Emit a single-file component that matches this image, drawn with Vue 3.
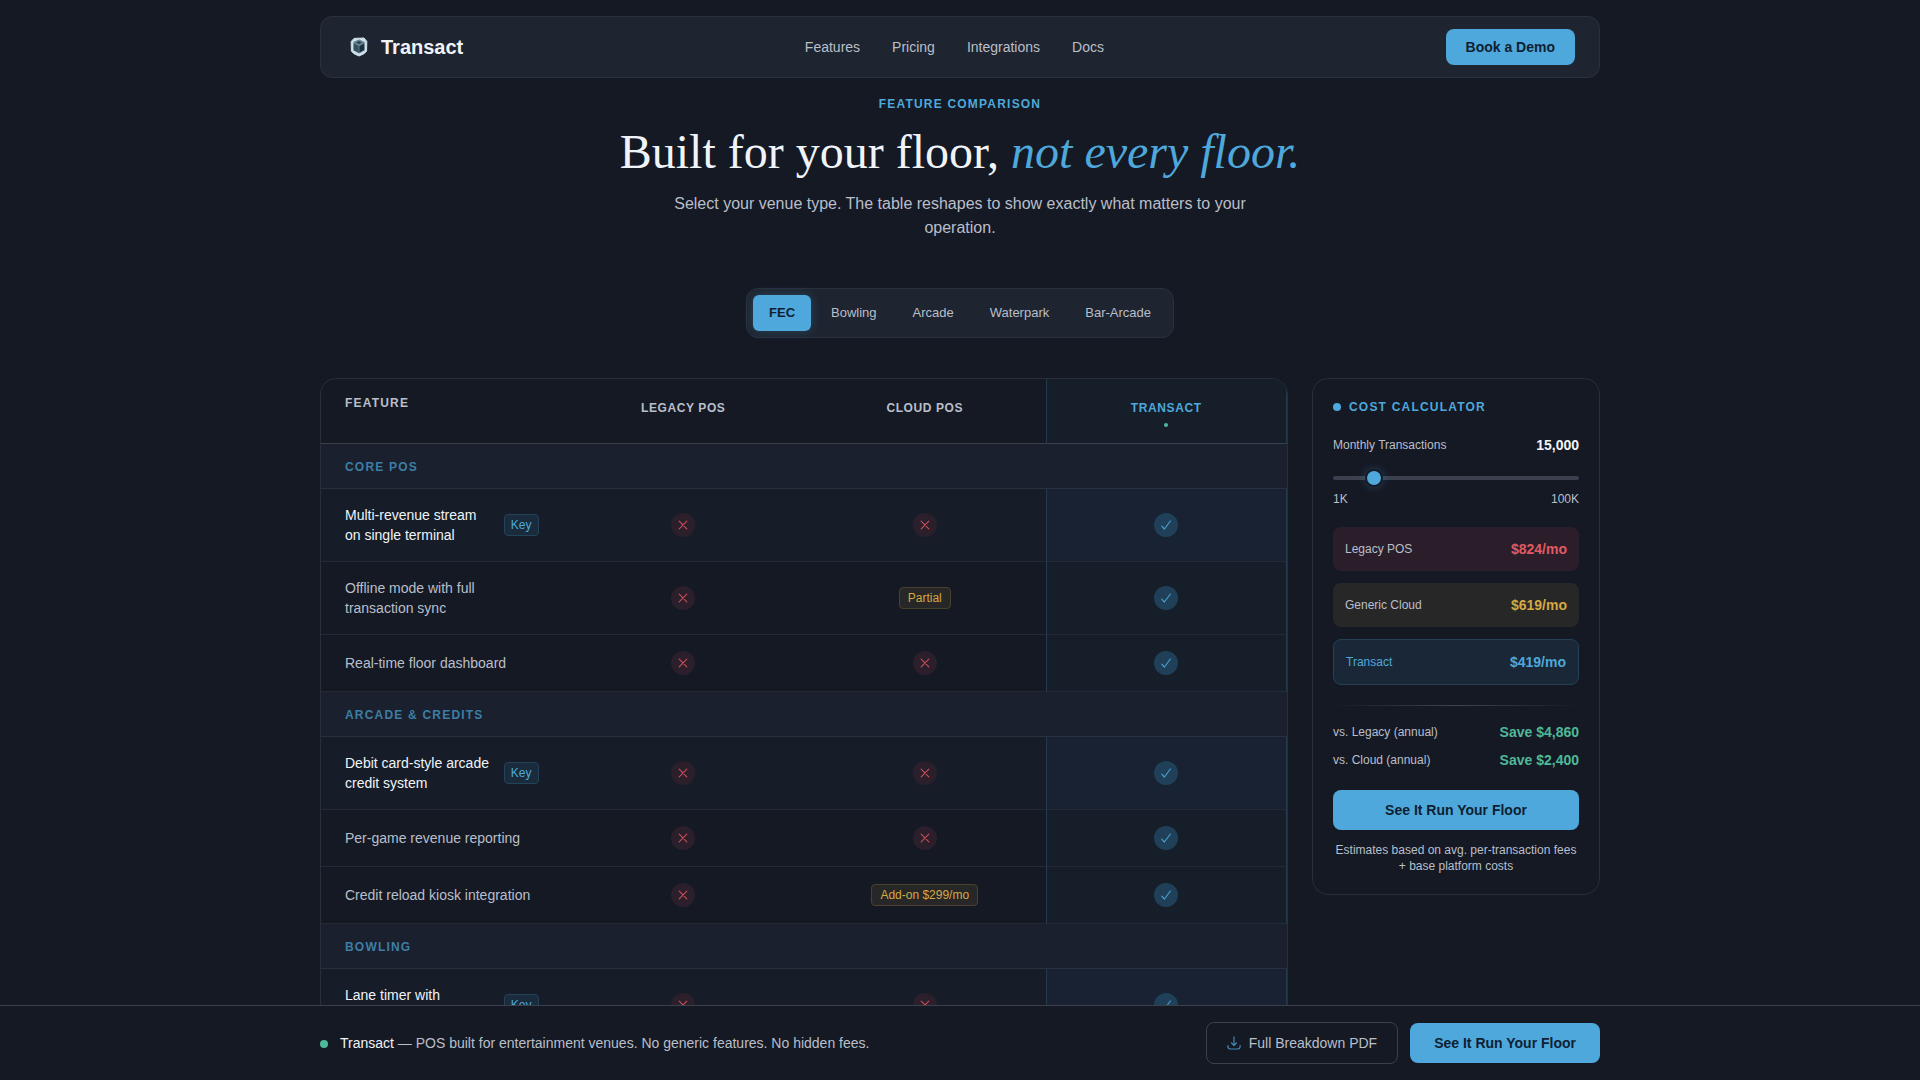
<template>
  <div class="page">
    <header class="nav">
      <a href="#" class="brand">
        <svg class="brand-logo" viewBox="0 0 28 28" aria-hidden="true">
          <path d="M9 5.4 L19 5 L21.8 8.4 L21.6 18 Q20.4 20.8 14 23 Q7.6 20.8 6.4 18 L6.2 8.6 Z" fill="#cfe2ea" stroke="#cfe2ea" stroke-width="1" stroke-linejoin="round" />
          <path d="M14 6.4 L19.6 9 V17.4 L14 20.4 L8.4 17.4 V9 Z" fill="#5d7886" />
          <path d="M14 6.8 L19.2 9.4 L14 12.4 L8.8 9.4 Z" fill="#6f8b98" />
          <path d="M8.8 10.6 L13.5 13.2 V19.4 L8.8 16.8 Z" fill="#34505f" />
          <path d="M19.2 10.6 L14.5 13.2 V19.4 L19.2 16.8 Z" fill="#1b313e" />
          <path d="M10.8 9.4 L14 8 L17.2 9.4 L14 11.2 Z" fill="#2b4654" />
        </svg>
        <span class="brand-name">Transact</span>
      </a>
      <nav class="nav-links">
        <a v-for="link in links" :key="link" href="#">{{ link }}</a>
      </nav>
      <button type="button" class="btn btn-demo">Book a Demo</button>
    </header>

    <main>
      <section class="hero">
        <p class="eyebrow">Feature Comparison</p>
        <h1>Built for your floor, <em>not every floor.</em></h1>
        <p class="lead">Select your venue type. The table reshapes to show exactly what matters to your operation.</p>
      </section>

      <div class="tabs">
        <button
          v-for="venue in venues"
          :key="venue"
          type="button"
          class="tab"
          :class="{ active: venue === activeVenue }"
          @click="activeVenue = venue"
        >{{ venue }}</button>
      </div>

      <div class="columns">
        <div class="table-card">
          <table>
            <thead>
              <tr>
                <th class="th-feature">Feature</th>
                <th>Legacy POS</th>
                <th>Cloud POS</th>
                <th class="own">Transact<span class="own-dot"></span></th>
              </tr>
            </thead>
            <tbody v-for="group in groups" :key="group.name">
              <tr class="group-row">
                <th colspan="4">{{ group.name }}</th>
              </tr>
              <tr v-for="row in group.rows" :key="row.label" :class="{ highlight: row.key }">
                <td>
                  <div class="feature">
                    <span>{{ row.label }}</span>
                    <span v-if="row.key" class="badge badge-key">Key</span>
                  </div>
                </td>
                <td
                  v-for="(value, index) in row.values"
                  :key="index"
                  class="value"
                  :class="{ own: index === 2 }"
                >
                  <span v-if="value === 'yes'" class="mark mark-yes">
                    <svg viewBox="0 0 24 24" role="img" aria-label="Yes"><path d="M7.8 13.2 L10.4 16 L16.4 8" /></svg>
                  </span>
                  <span v-else-if="value === 'no'" class="mark mark-no">
                    <svg viewBox="0 0 24 24" role="img" aria-label="No"><path d="M8.2 8.2 L15.8 15.8 M15.8 8.2 L8.2 15.8" /></svg>
                  </span>
                  <span v-else class="badge badge-partial">{{ value }}</span>
                </td>
              </tr>
            </tbody>
          </table>
        </div>

        <aside class="calc">
          <h2>Cost Calculator</h2>
          <div class="line">
            <label for="volume">Monthly Transactions</label>
            <strong>{{ format(volume) }}</strong>
          </div>
          <input id="volume" v-model.number="volume" type="range" min="1000" max="100000" step="1000" />
          <div class="scale">
            <span>1K</span>
            <span>100K</span>
          </div>

          <div class="costs">
            <div class="line cost legacy">
              <span>Legacy POS</span>
              <strong>${{ format(legacyCost) }}/mo</strong>
            </div>
            <div class="line cost cloud">
              <span>Generic Cloud</span>
              <strong>${{ format(cloudCost) }}/mo</strong>
            </div>
            <div class="line cost transact">
              <span>Transact</span>
              <strong>${{ format(transactCost) }}/mo</strong>
            </div>
          </div>

          <div class="divider"></div>

          <div class="savings">
            <div class="line">
              <span>vs. Legacy (annual)</span>
              <strong>Save ${{ format((legacyCost - transactCost) * 12) }}</strong>
            </div>
            <div class="line">
              <span>vs. Cloud (annual)</span>
              <strong>Save ${{ format((cloudCost - transactCost) * 12) }}</strong>
            </div>
          </div>

          <button type="button" class="btn btn-wide">See It Run Your Floor</button>
          <p class="note">Estimates based on avg. per-transaction fees + base platform costs</p>
        </aside>
      </div>
    </main>

    <footer class="bar">
      <div class="bar-inner">
        <p class="bar-text"><b>Transact</b> — POS built for entertainment venues. No generic features. No hidden fees.</p>
        <div class="bar-actions">
          <button type="button" class="btn-outline">
            <svg viewBox="0 0 14 14" aria-hidden="true">
              <path d="M7 0.8 V9.4 M4.4 6.9 L7 9.5 L9.6 6.9" />
              <path d="M0.9 9.6 V10.6 Q0.9 13 3.3 13 H10.7 Q13.1 13 13.1 10.6 V9.6" />
            </svg>
            Full Breakdown PDF
          </button>
          <button type="button" class="btn btn-large">See It Run Your Floor</button>
        </div>
      </div>
    </footer>
  </div>
</template>

<script setup>
import { ref, computed } from "vue";

const links = ["Features", "Pricing", "Integrations", "Docs"];
const venues = ["FEC", "Bowling", "Arcade", "Waterpark", "Bar-Arcade"];
const activeVenue = ref("FEC");

// values are in column order: legacy, cloud, transact
const groups = [
  {
    name: "Core POS",
    rows: [
      { label: "Multi-revenue stream on single terminal", key: true, values: ["no", "no", "yes"] },
      { label: "Offline mode with full transaction sync", values: ["no", "Partial", "yes"] },
      { label: "Real-time floor dashboard", values: ["no", "no", "yes"] },
    ],
  },
  {
    name: "Arcade & Credits",
    rows: [
      { label: "Debit card-style arcade credit system", key: true, values: ["no", "no", "yes"] },
      { label: "Per-game revenue reporting", values: ["no", "no", "yes"] },
      { label: "Credit reload kiosk integration", values: ["no", "Add-on $299/mo", "yes"] },
    ],
  },
  {
    name: "Bowling",
    rows: [
      { label: "Lane timer with automatic billing", key: true, values: ["no", "no", "yes"] },
    ],
  },
];

const volume = ref(15000);

const legacyCost = computed(() => Math.round(299 + volume.value * 0.035));
const cloudCost = computed(() => Math.round(169 + volume.value * 0.03));
const transactCost = computed(() => Math.round(119 + volume.value * 0.02));

function format(n) {
  return n.toLocaleString("en-US");
}
</script>

<style>
body {
  margin: 0;
  background: #151924;
}
</style>

<style scoped>
.page {
  box-sizing: border-box;
  max-width: 1328px;
  margin: 0 auto;
  padding: 16px 24px 120px;
  color: #b9bfca;
  font-family: "Liberation Sans", Arial, sans-serif;
  font-size: 14px;
  line-height: 20px;
}

.page * {
  box-sizing: border-box;
}

h1,
h2,
p {
  margin: 0;
}

button {
  font-family: inherit;
  font-size: 14px;
  cursor: pointer;
}

.nav {
  position: sticky;
  top: 16px;
  z-index: 2;
  display: flex;
  align-items: center;
  justify-content: space-between;
  padding: 12px 24px;
  background: #1e2530;
  border: 1px solid #283140;
  border-radius: 12px;
}

.brand {
  display: flex;
  align-items: center;
  gap: 8px;
  color: #f0f4f8;
  font-size: 20px;
  font-weight: bold;
  text-decoration: none;
}

.brand-logo {
  width: 28px;
  height: 28px;
}

.nav-links {
  display: flex;
  gap: 32px;
}

.nav-links a {
  color: #b9bfca;
  text-decoration: none;
}

.btn {
  height: 40px;
  padding: 0 24px;
  color: #0f1f33;
  font-weight: bold;
  background: #4ea8db;
  border: 0;
  border-radius: 8px;
}

.btn-demo {
  height: 36px;
  padding: 0 20px;
}

.btn-wide {
  width: 100%;
  margin-top: 20px;
}

.hero {
  padding-top: 18px;
  text-align: center;
}

.eyebrow {
  color: #4ea8db;
  font-size: 12px;
  font-weight: bold;
  line-height: 16px;
  letter-spacing: 0.1em;
  text-transform: uppercase;
}

h1 {
  margin: 12px 0;
  color: #f0f4f8;
  font-family: "Liberation Serif", "Times New Roman", serif;
  font-size: 48px;
  font-weight: normal;
  line-height: 56px;
}

h1 em {
  color: #4ea8db;
}

.lead {
  max-width: 600px;
  margin: 0 auto;
  font-size: 16px;
  line-height: 24px;
}

.tabs {
  display: flex;
  gap: 4px;
  width: fit-content;
  margin: 48px auto 40px;
  padding: 6px;
  background: #1e2430;
  border: 1px solid #2a303c;
  border-radius: 12px;
}

.tab {
  height: 36px;
  padding: 0 16px 2px;
  color: #b9bfca;
  font-size: 13px;
  background: none;
  border: 0;
  border-radius: 6px;
}

.tab.active {
  color: #0f1f33;
  font-weight: bold;
  background: #4ea8db;
  box-shadow: 0 0 12px rgba(78, 168, 219, 0.25);
}

.columns {
  display: grid;
  grid-template-columns: minmax(0, 1fr) 288px;
  align-items: start;
  gap: 24px;
}

.table-card {
  overflow: hidden;
  border: 1px solid #282e3a;
  border-radius: 16px;
}

table {
  width: 100%;
  table-layout: fixed;
  border-collapse: separate;
  border-spacing: 0;
}

thead th {
  padding: 20px 16px 16px;
  font-size: 12px;
  line-height: 18px;
  letter-spacing: 0.05em;
  text-transform: uppercase;
  vertical-align: top;
  border-bottom: 1px solid #3a404c;
}

thead .th-feature {
  padding: 16px 24px;
  line-height: 16px;
  letter-spacing: 0.1em;
  text-align: left;
}

.own {
  background: #161e2a;
  border-left: 1px solid #24394b;
  border-right: 1px solid #24394b;
}

thead .own {
  color: #4ea8db;
}

.own-dot {
  display: block;
  width: 4px;
  height: 4px;
  margin: 6px auto 0;
  background: #4fb89a;
  border-radius: 50%;
}

.group-row th {
  padding: 15px 24px 13px;
  color: #3d7ea6;
  font-size: 12px;
  line-height: 16px;
  letter-spacing: 0.1em;
  text-align: left;
  text-transform: uppercase;
  background: #1a202d;
  border-bottom: 1px solid #2a313d;
}

td {
  padding: 16px 24px;
  border-bottom: 1px solid #232935;
}

td.value {
  padding: 16px;
  text-align: center;
}

.highlight td {
  background: #161d29;
}

.highlight td.own {
  background: #182232;
}

.feature {
  display: flex;
  align-items: center;
  justify-content: space-between;
  gap: 12px;
}

.highlight .feature {
  color: #f0f4f8;
}

.badge {
  display: inline-block;
  padding: 0 8px;
  font-size: 12px;
  line-height: 20px;
  border: 1px solid;
  border-radius: 4px;
}

.badge-key {
  padding: 0 6px;
  color: #4ea8db;
  background: #1a2b3c;
  border-color: #24425a;
}

.badge-partial {
  color: #d4a843;
  background: #272727;
  border-color: #4a412c;
}

.mark {
  display: block;
  width: 24px;
  height: 24px;
  margin: 0 auto;
  border-radius: 50%;
}

.mark svg {
  display: block;
  fill: none;
  stroke-linecap: round;
  stroke-linejoin: round;
}

.mark-yes {
  background: #20405a;
}

.mark-yes svg {
  stroke: #4a9cca;
  stroke-width: 1.2;
}

.mark-no {
  background: #2b1f2b;
}

.mark-no svg {
  stroke: #c9505a;
  stroke-width: 1.1;
}

.calc {
  padding: 20px;
  font-size: 12px;
  border: 1px solid #282e3a;
  border-radius: 16px;
}

.calc h2 {
  display: flex;
  align-items: center;
  gap: 8px;
  margin-bottom: 20px;
  color: #4ea8db;
  font-size: 12px;
  line-height: 16px;
  letter-spacing: 0.1em;
  text-transform: uppercase;
}

.calc h2::before {
  content: "";
  width: 8px;
  height: 8px;
  background: #4ea8db;
  border-radius: 50%;
}

.line {
  display: flex;
  align-items: center;
  justify-content: space-between;
}

.line strong {
  color: #f0f4f8;
  font-size: 14px;
}

input[type="range"] {
  display: block;
  width: 100%;
  height: 18px;
  margin: 14px 0 4px;
  background: none;
  appearance: none;
  cursor: pointer;
}

input[type="range"]::-webkit-slider-runnable-track {
  height: 4px;
  background: #3a404e;
  border-radius: 2px;
}

input[type="range"]::-webkit-slider-thumb {
  width: 18px;
  height: 18px;
  margin-top: -7px;
  background: #4ea8db;
  border: 2px solid #151924;
  border-radius: 50%;
  box-shadow: 0 0 8px rgba(78, 168, 219, 0.3);
  appearance: none;
}

.scale {
  display: flex;
  justify-content: space-between;
  line-height: 16px;
}

.costs {
  display: flex;
  flex-direction: column;
  gap: 12px;
  margin-top: 20px;
}

.cost {
  padding: 12px;
  border-radius: 8px;
}

.cost.legacy {
  background: #2b1e2a;
}

.cost.legacy strong {
  color: #e05a62;
}

.cost.cloud {
  background: #282728;
}

.cost.cloud strong {
  color: #d4a843;
}

.cost.transact {
  color: #4ea8db;
  background: #1a2737;
  border: 1px solid #254158;
}

.cost.transact strong {
  color: #4ea8db;
}

.divider {
  height: 1px;
  margin: 20px 0 16px;
  background: linear-gradient(90deg, transparent, #3f4550, transparent);
}

.savings {
  display: flex;
  flex-direction: column;
  gap: 8px;
}

.savings strong {
  color: #4fb89a;
}

.note {
  margin-top: 12px;
  line-height: 16px;
  text-align: center;
}

.bar {
  position: fixed;
  right: 0;
  bottom: 0;
  left: 0;
  z-index: 3;
  padding: 16px 24px;
  background: #151924;
  border-top: 1px solid #3a414d;
}

.bar-inner {
  display: flex;
  align-items: center;
  justify-content: space-between;
  max-width: 1280px;
  margin: 0 auto;
}

.bar-text::before {
  content: "";
  display: inline-block;
  width: 8px;
  height: 8px;
  margin-right: 12px;
  background: #4fb89a;
  border-radius: 50%;
}

.bar-text b {
  color: #f0f4f8;
  font-weight: normal;
}

.bar-actions {
  display: flex;
  align-items: center;
  gap: 12px;
}

.btn-outline {
  display: flex;
  align-items: center;
  gap: 8px;
  height: 42px;
  padding: 0 20px;
  color: #b9bfca;
  background: none;
  border: 1px solid #3a414d;
  border-radius: 8px;
}

.btn-outline svg {
  width: 14px;
  height: 14px;
  fill: none;
  stroke: #4388b5;
  stroke-width: 1.2;
  stroke-linecap: round;
  stroke-linejoin: round;
}

@media (max-width: 960px) {
  .nav-links {
    display: none;
  }

  .columns {
    grid-template-columns: 1fr;
  }

  .table-card {
    overflow-x: auto;
  }

  table {
    min-width: 720px;
  }
}
</style>
